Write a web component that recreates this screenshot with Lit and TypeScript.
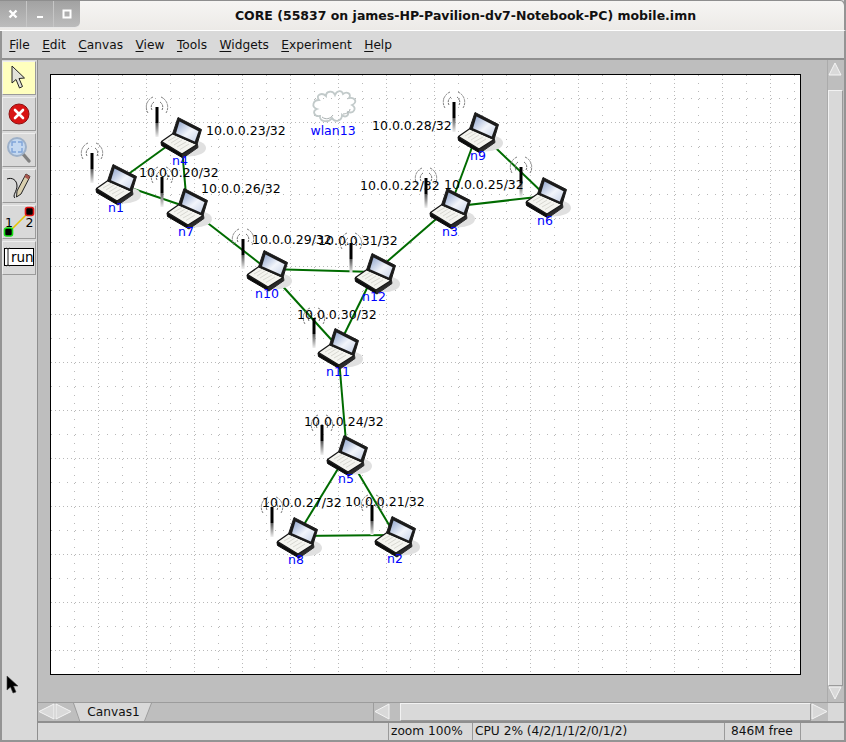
import { LitElement, html, svg, css } from 'lit'
import { customElement } from 'lit/decorators.js'

type Node = { id: string; x: number; y: number; lx: number; ly: number; ax: number; ay: number; ip: string; ipx: number; ipy: number }

// x,y = laptop corner, lx,ly = name label, ax,ay = antenna top, ipx,ipy = address label start
const nodes: Node[] = [
  { id: 'n1', x: 96, y: 164, lx: 116, ly: 207, ax: 92, ay: 153, ip: '10.0.0.20/32', ipx: 139, ipy: 172 },
  { id: 'n4', x: 161, y: 117, lx: 180, ly: 160, ax: 157, ay: 107, ip: '10.0.0.23/32', ipx: 206, ipy: 130 },
  { id: 'n7', x: 167, y: 188, lx: 186, ly: 231, ax: 162, ay: 177, ip: '10.0.0.26/32', ipx: 201, ipy: 188 },
  { id: 'n10', x: 247, y: 250, lx: 267, ly: 293, ax: 243, ay: 239, ip: '10.0.0.29/32', ipx: 252, ipy: 239 },
  { id: 'n12', x: 355, y: 253, lx: 374, ly: 296, ax: 351, ay: 243, ip: '10.0.0.31/32', ipx: 318, ipy: 240 },
  { id: 'n11', x: 318, y: 328, lx: 338, ly: 371, ax: 314, ay: 318, ip: '10.0.0.30/32', ipx: 297, ipy: 314 },
  { id: 'n3', x: 430, y: 188, lx: 450, ly: 231, ax: 426, ay: 178, ip: '10.0.0.22/32', ipx: 360, ipy: 185 },
  { id: 'n9', x: 458, y: 112, lx: 478, ly: 155, ax: 454, ay: 102, ip: '10.0.0.28/32', ipx: 372, ipy: 125 },
  { id: 'n6', x: 526, y: 177, lx: 545, ly: 220, ax: 521, ay: 167, ip: '10.0.0.25/32', ipx: 444, ipy: 184 },
  { id: 'n5', x: 327, y: 435, lx: 346, ly: 478, ax: 322, ay: 425, ip: '10.0.0.24/32', ipx: 304, ipy: 421 },
  { id: 'n8', x: 277, y: 517, lx: 296, ly: 559, ax: 272, ay: 507, ip: '10.0.0.27/32', ipx: 262, ipy: 502 },
  { id: 'n2', x: 375, y: 516, lx: 395, ly: 558, ax: 372, ay: 505, ip: '10.0.0.21/32', ipx: 345, ipy: 501 },
]

const links = [
  ['n1', 'n4'], ['n1', 'n7'], ['n4', 'n7'], ['n7', 'n10'], ['n10', 'n12'], ['n10', 'n11'], ['n12', 'n11'],
  ['n12', 'n3'], ['n3', 'n9'], ['n3', 'n6'], ['n9', 'n6'], ['n11', 'n5'], ['n5', 'n8'], ['n5', 'n2'], ['n8', 'n2'],
]

const menus = ['File', 'Edit', 'Canvas', 'View', 'Tools', 'Widgets', 'Experiment', 'Help']

function gridDots() {
  const dots = []
  for (let i = 1; i < 48; i += 4) {
    dots.push(svg`<rect x="0" y=${i} width="1" height="1"/><rect x=${i} y="0" width="1" height="1"/>`)
  }
  for (let i = 1; i < 48; i += 8) {
    dots.push(svg`<rect x="24" y=${i} width="1" height="1"/><rect x=${i} y="24" width="1" height="1"/>`)
  }
  return dots
}

function center(id: string) {
  const n = nodes.find((o) => o.id === id)!
  return { x: n.x + 20, y: n.y + 19 }
}

@customElement('app-root')
export class AppRoot extends LitElement {
  static styles = css`
    :host {
      display: block;
      width: 846px;
      height: 742px;
      font-family: 'DejaVu Sans', sans-serif;
      font-size: 12.5px;
      color: #111;
      overflow: hidden;
      position: relative;
    }

    .window {
      height: 742px;
      box-sizing: border-box;
      display: flex;
      flex-direction: column;
      background: #d9d9d9;
      border-left: 2px solid #949494;
      border-right: 2px solid #949494;
      border-bottom: 2px solid #949494;
    }

    .title {
      height: 31px;
      margin: 0 -2px;
      flex: none;
      display: flex;
      background: linear-gradient(#f6f5f3, #eceae7);
      border-top: 1px solid #8e8e8e;
      border-right: 2px solid #949494;
      border-radius: 0 6px 0 0;
      box-sizing: border-box;
      border-bottom: 1px solid #fff;
    }

    .wm-buttons {
      width: 80px;
      height: 26px;
      display: flex;
      flex: none;
      background: linear-gradient(#a2a2a2, #bcbcbc);
      border-radius: 0 0 5px 0;
      box-shadow: 0 1px 0 #e8e8e8;
    }

    .wm-buttons span {
      flex: 1;
      display: flex;
      align-items: center;
      justify-content: center;
      border-right: 1px solid #c6c6c6;
    }

    .wm-buttons span:last-child {
      border-right: none;
    }

    .title-text {
      flex: 1;
      text-align: center;
      font-weight: bold;
      font-size: 12.5px;
      line-height: 29px;
      margin-left: 7px;
      white-space: nowrap;
    }

    .menu {
      height: 29px;
      flex: none;
      box-sizing: border-box;
      display: flex;
      align-items: center;
      font-size: 12.2px;
      padding-left: 1px;
      border-bottom: 2px solid #8f8f8f;
    }

    .menu span {
      padding: 0 6.25px;
    }

    .menu u {
      text-underline-offset: 2px;
    }

    .body {
      flex: 1;
      min-height: 0;
      display: grid;
      grid-template-columns: 36px 1fr;
    }

    .toolbar {
      display: flex;
      flex-direction: column;
      gap: 2px;
      padding-top: 1px;
      border-right: 1px solid #8f8f8f;
    }

    .tool {
      width: 34px;
      height: 34px;
      box-sizing: border-box;
      display: flex;
      align-items: center;
      justify-content: center;
      border-top: 1px solid #eee;
      border-left: 1px solid #eee;
      border-right: 1px solid #9a9a9a;
      border-bottom: 1px solid #9a9a9a;
    }

    .tool.active {
      background: #ffffbe;
    }

    .main {
      display: flex;
      flex-direction: column;
      min-width: 0;
    }

    .view {
      height: 642px;
      flex: none;
      display: flex;
      background: #bebebe;
    }

    .canvas-pad {
      flex: 1;
      padding: 14px 0 0 12px;
    }

    .canvas {
      width: 751px;
      height: 601px;
      box-sizing: border-box;
      border: 1px solid #000;
      background: #fff;
    }

    .canvas svg {
      display: block;
    }

    .net-ip {
      font-size: 12.5px;
      fill: #000;
    }

    .net-name {
      font-size: 12.5px;
      fill: #0000ff;
      text-anchor: middle;
    }

    .vscroll {
      width: 15px;
      flex: none;
      display: flex;
      flex-direction: column;
      padding: 2px 1px 0 0;
      background: #bebebe;
      border-left: 1px solid #ababab;
    }

    .vscroll .trough {
      height: 14px;
    }

    .vscroll .thumb {
      height: 596px;
      background: #d9d9d9;
      border: 1px solid #f2f2f2;
      border-right-color: #9a9a9a;
      border-bottom-color: #9a9a9a;
      box-sizing: border-box;
    }

    .arrow {
      display: block;
      flex: none;
    }

    .tabs {
      height: 18px;
      flex: none;
      display: flex;
      background: #bebebe;
      border-top: 1px solid #9c9c9c;
      border-bottom: 2px solid #8f8f8f;
      box-sizing: content-box;
    }

    .tab-arrows {
      display: flex;
      flex: none;
      width: 35px;
      background: #bebebe;
    }

    .tab {
      width: 79px;
      flex: none;
      background: #9a9a9a;
      clip-path: polygon(0 0, 100% 0, 91% 100%, 8% 100%);
      position: relative;
      display: flex;
    }

    .tab-inner {
      flex: 1;
      margin: 0 1px;
      background: #d9d9d9;
      clip-path: polygon(0 0, 100% 0, 91% 100%, 8% 100%);
      display: flex;
      align-items: center;
      justify-content: center;
      font-size: 12.2px;
      padding-left: 2px;
    }

    .tab-gap {
      width: 221px;
      flex: none;
    }

    .hscroll {
      flex: 1;
      display: flex;
      border-left: 1px solid #9c9c9c;
    }

    .hscroll .trough {
      width: 10px;
      flex: none;
    }

    .hscroll .thumb {
      flex: 1;
      background: #d9d9d9;
      border: 1px solid #f2f2f2;
      border-right-color: #9a9a9a;
      border-bottom-color: #9a9a9a;
      box-sizing: border-box;
    }

    .corner {
      width: 16px;
      flex: none;
      background: #d9d9d9;
    }

    .status {
      height: 17px;
      flex: none;
      display: flex;
      font-size: 12.2px;
    }

    .status div {
      box-sizing: border-box;
      flex: none;
      height: 100%;
      line-height: 16px;
      padding-left: 2px;
      border-right: 1px solid #9a9a9a;
      white-space: nowrap;
      overflow: hidden;
    }

    .status .left { width: 351px; padding: 0; }
    .status .zoom { width: 84px; }
    .status .cpu { width: 252px; }
    .status .mem { width: 76px; padding-left: 6px; }
    .status .end { flex: 1; border-right: none; }

    .pointer {
      position: absolute;
      left: 6px;
      top: 675px;
    }
  `

  private triangle(dir: 'up' | 'down' | 'left' | 'right', w: number, h: number) {
    const pts = {
      up: `${w / 2},1 ${w - 1},${h - 1} 1,${h - 1}`,
      down: `1,1 ${w - 1},1 ${w / 2},${h - 1}`,
      left: `1,${h / 2} ${w - 1},1 ${w - 1},${h - 1}`,
      right: `1,1 ${w - 1},${h / 2} 1,${h - 1}`,
    }[dir]
    return html`<svg class="arrow" width=${w} height=${h} viewBox="0 0 ${w} ${h}">
      <polygon points=${pts} fill="#d9d9d9" stroke="#f4f4f4" stroke-width="1"/>
    </svg>`
  }

  private defs() {
    return svg`<defs>
      <pattern id="grid" patternUnits="userSpaceOnUse" x="50" y="74" width="48" height="48">
        <g fill="#b9b9b9">${gridDots()}</g>
      </pattern>
      <linearGradient id="scr" x1="0" y1="0" x2="1" y2="1">
        <stop offset="0" stop-color="#8ea3cc"/>
        <stop offset="0.55" stop-color="#f2f5fb"/>
        <stop offset="1" stop-color="#c8d3e8"/>
      </linearGradient>
      <linearGradient id="fade" x1="0" y1="0" x2="0" y2="1">
        <stop offset="0" stop-color="#555"/>
        <stop offset="1" stop-color="#f0f0f0"/>
      </linearGradient>
      <symbol id="laptop" width="46" height="44" viewBox="0 0 46 44" overflow="visible">
        <ellipse cx="28" cy="31" rx="17" ry="8.5" fill="#e0e0e0"/>
        <polygon points="0,25 21,37 22,41 0.5,28.5" fill="#0c0c0c" stroke="#0c0c0c" stroke-linejoin="round"/>
        <polygon points="21,37 36.5,27.5 37,30.5 22,41" fill="#2a2a2a" stroke="#2a2a2a" stroke-linejoin="round"/>
        <polygon points="0.5,24.5 12,16.5 36,27.5 21,37" fill="#f4f4ef" stroke="#161616" stroke-width="1.3" stroke-linejoin="round"/>
        <path d="M7,24 L15,19.5 M10,26 L18,21 M13,28 L21,23 M16,30 L25,25 M19,32.5 L28,27" stroke="#d8d8d2" stroke-width="1" fill="none"/>
        <polygon points="17,0.5 40.5,12.5 36,27.5 11.5,17" fill="#1b1b1b" stroke="#1b1b1b" stroke-width="1" stroke-linejoin="round"/>
        <polygon points="18.5,4.5 37.5,14.2 33.8,24.5 15,16.3" fill="url(#scr)"/>
      </symbol>
      <symbol id="antenna" width="26" height="44" viewBox="-13 -12 26 44" overflow="visible">
        <path d="M-4,-10 A11,11 0 0 0 -9,6 M4,-10 A11,11 0 0 1 9,6" fill="none" stroke="#808080" stroke-dasharray="2.5 0.8"/>
        <path d="M-3,-5 A6,6 0 0 0 -5,3 M3,-5 A6,6 0 0 1 5,3" fill="none" stroke="#707070" stroke-dasharray="2.5 0.8"/>
        <rect x="-1.5" y="0" width="3" height="16" fill="#000"/>
        <rect x="-1.5" y="16" width="3" height="14" fill="url(#fade)"/>
      </symbol>
    </defs>`
  }

  private network() {
    return html`<svg width="749" height="599" viewBox="51 75 749 599" font-family="'DejaVu Sans', sans-serif">
      ${this.defs()}
      <rect x="51" y="75" width="749" height="599" fill="url(#grid)"/>
      <path d="M319,100 C315,95 322,92 326,96 C326,91 333,90 335,95 C337,90 342,90 343,94 C347,91 352,94 349,98 C355,97 358,102 352,105 C357,108 354,114 348,112 C349,116 345,118 342,115 C342,121 335,123 332,118 C329,123 319,122 320,116 C314,117 312,111 317,109 C311,107 313,100 319,100 Z"
        fill="none" stroke="#c2caca" stroke-width="1.8"/>
      <path d="M322,117 C326,120 330,119 333,115 M343,114 C346,114 350,112 350,109" fill="none" stroke="#a9b0b0"/>
      ${links.map(([a, b]) => {
        const p = center(a)
        const q = center(b)
        return svg`<line x1=${p.x} y1=${p.y} x2=${q.x} y2=${q.y} stroke="#006b00" stroke-width="2"/>`
      })}
      ${nodes.map((n) => svg`
        <use href="#antenna" x=${n.ax - 13} y=${n.ay - 12}/>
        <use href="#laptop" x=${n.x} y=${n.y}/>
      `)}
      ${nodes.map((n) => svg`
        <text class="net-ip" x=${n.ipx} y=${n.ipy + 5}>${n.ip}</text>
        <text class="net-name" x=${n.lx} y=${n.ly + 5}>${n.id}</text>
      `)}
      <text class="net-name" x="333" y="135">wlan13</text>
    </svg>`
  }

  private toolIcons() {
    return [
      html`<svg width="18" height="26" viewBox="0 0 18 26">
        <path d="M2,1 L2,18 L6,14.5 L9.5,23 L12.5,21.5 L9,13.5 L14.5,13 Z" fill="#e2e2da" stroke="#222" stroke-width="1"/>
      </svg>`,
      html`<svg width="22" height="22" viewBox="0 0 22 22">
        <circle cx="11" cy="11" r="10" fill="#d81414" stroke="#8d1010"/>
        <path d="M7,7 L15,15 M15,7 L7,15" stroke="#fff" stroke-width="2.6" stroke-linecap="round"/>
      </svg>`,
      html`<svg width="26" height="28" viewBox="0 0 26 28">
        <path d="M17,18 L23,25" stroke="#808080" stroke-width="3.4" stroke-linecap="round"/>
        <circle cx="11" cy="11" r="9" fill="#c4d8f0" stroke="#9db0c8" stroke-width="2"/>
        <path d="M6,10 L6,6 L10,6 M12,6 L16,6 L16,10 M16,12 L16,16 L12,16 M10,16 L6,16 L6,12" stroke="#7ea3d8" stroke-width="1.4" fill="none"/>
      </svg>`,
      html`<svg width="26" height="28" viewBox="0 0 26 28">
        <path d="M1,7 C6,5 11,8 11,14 C11,19 6,24 9,26" fill="none" stroke="#111"/>
        <path d="M20,2 L24,4.5 L15,22 L10.5,25 L11,19 Z" fill="#d9cfae" stroke="#222"/>
        <path d="M20,2 L24,4.5 L22.5,7.5 L18.5,5 Z" fill="#a8564e"/>
      </svg>`,
      html`<svg width="32" height="32" viewBox="0 0 32 32" font-family="'DejaVu Sans', sans-serif">
        <line x1="6" y1="26" x2="26" y2="6" stroke="#e8c400" stroke-width="1.6"/>
        <rect x="1.5" y="22" width="8" height="8" rx="2" fill="#000" stroke="#16e016" stroke-width="1.6"/>
        <rect x="22.5" y="1.5" width="8" height="8" rx="2" fill="#000" stroke="#e01616" stroke-width="1.6"/>
        <text x="2" y="21" font-size="12.5" fill="#000">1</text>
        <text x="22.5" y="21" font-size="12.5" fill="#000">2</text>
      </svg>`,
      html`<svg width="32" height="22" viewBox="0 0 32 22" font-family="'DejaVu Sans', sans-serif">
        <rect x="1.5" y="1.5" width="29" height="17" fill="#fff" stroke="#000"/>
        <path d="M3,1 L5,2 L7,1 M5,2 L5,18 M3,19 L5,18 L7,19" fill="none" stroke="#222"/>
        <text x="8" y="15" font-size="13.5" fill="#000">run</text>
      </svg>`,
    ]
  }

  render() {
    return html`
      <div class="window">
        <div class="title">
          <div class="wm-buttons">
            <span><svg width="10" height="10" viewBox="0 0 10 10"><path d="M1.5,1.5 L8.5,8.5 M8.5,1.5 L1.5,8.5" stroke="#fff" stroke-width="2.4"/></svg></span>
            <span><svg width="10" height="10" viewBox="0 0 10 10"><rect x="2" y="7" width="6" height="2" fill="#fff"/></svg></span>
            <span><svg width="10" height="10" viewBox="0 0 10 10"><rect x="1.5" y="1.5" width="7" height="7" fill="none" stroke="#fff" stroke-width="2"/></svg></span>
          </div>
          <div class="title-text">CORE (55837 on james-HP-Pavilion-dv7-Notebook-PC) mobile.imn</div>
        </div>
        <div class="menu">
          ${menus.map((m) => html`<span><u>${m[0]}</u>${m.slice(1)}</span>`)}
        </div>
        <div class="body">
          <div class="toolbar">
            ${this.toolIcons().map((icon, i) => html`<div class="tool ${i === 0 ? 'active' : ''}">${icon}</div>`)}
          </div>
          <div class="main">
            <div class="view">
              <div class="canvas-pad">
                <div class="canvas">${this.network()}</div>
              </div>
              <div class="vscroll">
                ${this.triangle('up', 14, 14)}
                <div class="trough"></div>
                <div class="thumb"></div>
                ${this.triangle('down', 14, 14)}
              </div>
            </div>
            <div class="tabs">
              <div class="tab-arrows">
                ${this.triangle('left', 17, 17)}
                ${this.triangle('right', 17, 17)}
              </div>
              <div class="tab"><div class="tab-inner">Canvas1</div></div>
              <div class="tab-gap"></div>
              <div class="hscroll">
                ${this.triangle('left', 16, 17)}
                <div class="trough"></div>
                <div class="thumb"></div>
                ${this.triangle('right', 17, 17)}
              </div>
              <div class="corner"></div>
            </div>
            <div class="status">
              <div class="left"></div>
              <div class="zoom">zoom 100%</div>
              <div class="cpu">CPU 2% (4/2/1/1/2/0/1/2)</div>
              <div class="mem">846M free</div>
              <div class="end"></div>
            </div>
          </div>
        </div>
      </div>
      <svg class="pointer" width="16" height="20" viewBox="0 0 16 20">
        <path d="M1,1 L1,15 L4.5,12 L7,18 L10,17 L7.5,11 L12,11 Z" fill="#000" stroke="#444" stroke-width="0.6"/>
      </svg>
    `
  }
}
